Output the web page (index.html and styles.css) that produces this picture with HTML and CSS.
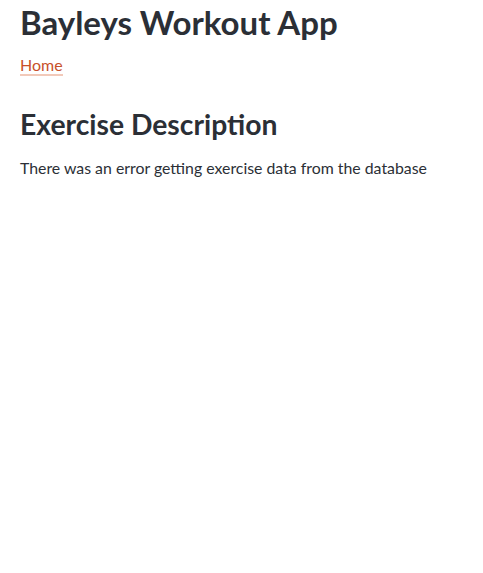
FILE: index.html
```html
<!DOCTYPE html>
<html lang="en">
<head>
<meta charset="utf-8">
<title>Bayleys Workout App</title>
<link rel="stylesheet" href="styles.css">
</head>
<body>
<div class="page">
  <h1 class="title">Bayleys Workout App</h1>
  <nav class="nav"><a class="nav-link" href="#">Home</a></nav>
  <h2 class="section-title">Exercise Description</h2>
  <p class="message">There was an error getting exercise data from the database</p>
</div>
</body>
</html>
```
FILE: styles.css
```css
html, body {
  margin: 0;
  padding: 0;
  background: #ffffff;
}
body {
  font-family: Lato, "Liberation Sans", sans-serif;
  color: #2b2f36;
}
.page {
  padding: 3px 20px 0;
}
.title {
  margin: 0;
  font-size: 33px;
  font-weight: 700;
  line-height: 1.2;
}
.nav {
  margin-top: 10px;
  font-size: 16px;
  line-height: 1.5;
}
.nav-link {
  color: #c8502a;
  text-decoration: none;
  border-bottom: 2px solid #f2c9b9;
}
.section-title {
  margin: 31px 0 0;
  font-size: 28.3px;
  font-weight: 700;
  line-height: 1.2;
}
.message {
  margin: 14px 0 0;
  font-size: 15.85px;
  line-height: 1.5;
}
```
